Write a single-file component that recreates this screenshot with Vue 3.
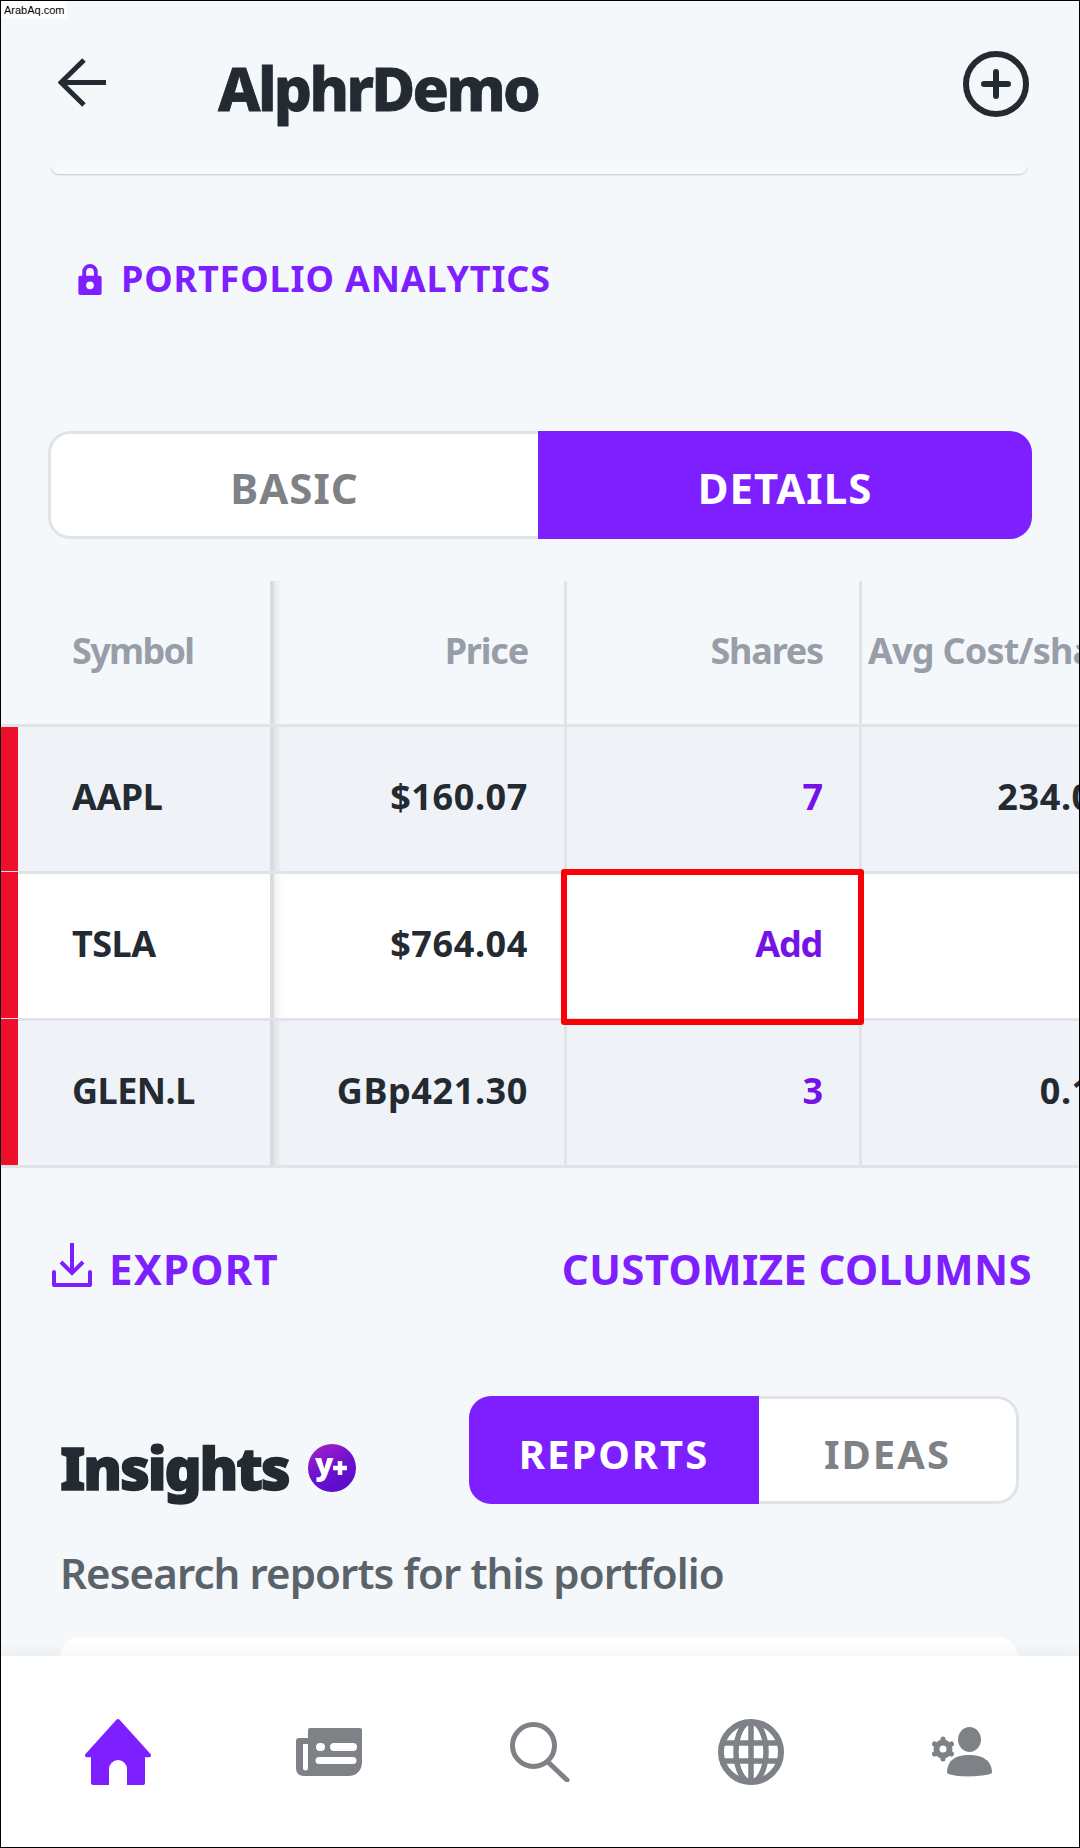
<template>
  <div class="app">
    <div class="watermark">ArabAq.com</div>

    <div class="scroll">
      <header class="header">
        <svg class="back" viewBox="0 0 50 50" width="50" height="50">
          <path d="M48 24.5H4M26 2 3 24.5 26 47" fill="none" stroke="#232a31" stroke-width="5" />
        </svg>
        <h1 class="title">AlphrDemo</h1>
        <svg class="plus" viewBox="0 0 66 66" width="66" height="66">
          <circle cx="33" cy="33" r="30" fill="none" stroke="#232a31" stroke-width="6" />
          <path d="M33 21v24M21 33h24" fill="none" stroke="#232a31" stroke-width="6" stroke-linecap="round" />
        </svg>
      </header>

      <div class="card-end"></div>

      <div class="analytics">
        <svg class="lock" viewBox="0 0 24 32" width="24" height="31">
          <path d="M6 13V8a6 6 0 0 1 12 0v5" fill="none" stroke="#7e1fff" stroke-width="4" />
          <path fill-rule="evenodd" d="M2 12h20a2 2 0 0 1 2 2v16a2 2 0 0 1-2 2H2a2 2 0 0 1-2-2V14a2 2 0 0 1 2-2Zm10 6a4 4 0 1 0 0 8 4 4 0 0 0 0-8Z" fill="#7e1fff" />
        </svg>
        <span>PORTFOLIO ANALYTICS</span>
      </div>

      <div class="switch main-switch">
        <div class="seg">BASIC</div>
        <div class="seg on">DETAILS</div>
      </div>

      <div class="table">
        <div class="row head">
          <div class="cell sym">Symbol</div>
          <div class="cell price">Price</div>
          <div class="cell shares">Shares</div>
          <div class="cell avg">Avg Cost/share</div>
        </div>
        <div v-for="r in rows" :key="r.sym" class="row body" :class="{ alt: r.alt }">
          <div class="cell sym"><i class="red"></i>{{ r.sym }}</div>
          <div class="cell price">{{ r.price }}</div>
          <div class="cell shares link">
            {{ r.shares }}
            <div v-if="r.mark" class="mark"></div>
          </div>
          <div class="cell avg">{{ r.avg }}</div>
        </div>
      </div>

      <div class="actions">
        <div class="export">
          <svg viewBox="0 0 40 44" width="40" height="44">
            <path d="M20 0v29M9 19l11 11 11-11" fill="none" stroke="#7e1fff" stroke-width="4" />
            <path d="M2 29v13h36V29" fill="none" stroke="#7e1fff" stroke-width="4" stroke-linejoin="round" stroke-linecap="round" />
          </svg>
          <span>EXPORT</span>
        </div>
        <div class="customize">CUSTOMIZE COLUMNS</div>
      </div>

      <div class="insights">
        <div class="insights-title">
          <h2>Insights</h2>
          <svg class="badge" viewBox="0 0 48 48" width="48" height="48">
            <defs>
              <linearGradient id="yplus" x1="0.2" y1="0" x2="0.7" y2="1">
                <stop offset="0" stop-color="#a51fc4" />
                <stop offset="0.55" stop-color="#6a10d0" />
                <stop offset="1" stop-color="#5a0cc8" />
              </linearGradient>
            </defs>
            <circle cx="24" cy="24" r="24" fill="url(#yplus)" />
            <text x="7" y="31" class="badge-y">y</text>
            <path d="M32 17v14M25 24h14" stroke="#fff" stroke-width="4.5" fill="none" />
          </svg>
        </div>
        <div class="switch small-switch">
          <div class="seg on">REPORTS</div>
          <div class="seg">IDEAS</div>
        </div>
      </div>

      <p class="research">Research reports for this portfolio</p>
      <div class="report-card"></div>
    </div>

    <nav class="tabs">
      <svg viewBox="0 0 66 66" width="66" height="66">
        <path fill="#7e1fff" d="M33 0a2 2 0 0 1 1.600.8L65.500 35a2 2 0 0 1-1.500 3.300H60V64a2 2 0 0 1-2 2H42V50a9 9 0 0 0-18 0v16H8a2 2 0 0 1-2-2V38.300H2A2 2 0 0 1 .5 35L31.400.8A2 2 0 0 1 33 0Z" />
      </svg>
      <svg viewBox="0 0 66 48" width="66" height="48">
        <path fill="#7e8287" fill-rule="evenodd" d="M14 0h50a2 2 0 0 1 2 2v32c0 8-5 14-14 14H8c-5 0-8-3-8-8V13a3 3 0 0 1 3-3h9V2a2 2 0 0 1 2-2ZM7 16v24a2.500 2.500 0 0 0 5 0V16ZM24 15a4 4 0 0 0 0 8h1a4 4 0 0 0 0-8Zm14 0a4 4 0 0 0 0 8h19a4 4 0 0 0 0-8ZM23 29a3.500 3.500 0 0 0 0 7h34a3.500 3.500 0 0 0 0-7Z" />
      </svg>
      <svg viewBox="0 0 60 60" width="60" height="60">
        <circle cx="23.500" cy="23.500" r="21" fill="none" stroke="#7e8287" stroke-width="5" />
        <path d="M38 40l19 18" fill="none" stroke="#7e8287" stroke-width="5" stroke-linecap="round" />
      </svg>
      <svg viewBox="0 0 66 66" width="66" height="66">
        <circle cx="33" cy="33" r="30" fill="none" stroke="#7e8287" stroke-width="6" />
        <ellipse cx="33" cy="33" rx="15" ry="30" fill="none" stroke="#7e8287" stroke-width="5.500" />
        <path d="M33 3v60M4 24h58M4 42h58" fill="none" stroke="#7e8287" stroke-width="5.500" />
      </svg>
      <svg viewBox="0 0 60 50" width="60" height="50">
        <ellipse cx="37.500" cy="12.500" rx="11.500" ry="12.500" fill="#7e8287" />
        <path fill="#7e8287" d="M15 46c0-13 9-18 22-18s23 5 23 18c-6 4-39 5-45 0Z" />
        <circle cx="11" cy="22" r="6.500" fill="none" stroke="#7e8287" stroke-width="6" />
        <path d="M11 12v3M11 29v3M2.500 17l2.500 1.500M17 25.500l2.500 1.500M2.500 27l2.500-1.500M17 18.500l2.500-1.500" stroke="#7e8287" stroke-width="5" stroke-linecap="round" />
      </svg>
    </nav>
  </div>
</template>

<script setup>
const rows = [
  { sym: 'AAPL', price: '$160.07', shares: '7', avg: '234.00', alt: true },
  { sym: 'TSLA', price: '$764.04', shares: 'Add', avg: '', mark: true },
  { sym: 'GLEN.L', price: 'GBp421.30', shares: '3', avg: '0.10', alt: true },
];
</script>

<style>
html,
body {
  margin: 0;
  background: #fff;
}
</style>

<style scoped>
.app {
  position: relative;
  width: 1080px;
  height: 1848px;
  box-sizing: border-box;
  border: 1px solid #000;
  background: #f5f8fb;
  display: flex;
  flex-direction: column;
  overflow: hidden;
  font-family: "Noto Sans", "Open Sans", sans-serif;
  color: #232a31;
}

.watermark {
  position: absolute;
  left: 0;
  top: 0;
  height: 18px;
  padding: 0 2px 0 3px;
  background: #fff;
  color: #000;
  font: 11px/18px "Liberation Sans", sans-serif;
}

.scroll {
  flex: 1;
  overflow: hidden;
}

.header {
  display: flex;
  align-items: center;
  height: 165px;
  padding: 0 50px 0 57px;
}

.back {
  margin-top: -2px;
}

.title {
  margin: 8px 0 0 110px;
  flex: 1;
  font-size: 60px;
  font-weight: 800;
  letter-spacing: -2.6px;
  -webkit-text-stroke: 0.8px #232a31;
}

.card-end {
  height: 8px;
  margin: 0 52px 0 50px;
  border-radius: 0 0 18px 18px;
  background: #f7f9fc;
  box-shadow: 0 1px 2px rgba(0, 0, 0, 0.2);
}

.analytics {
  display: flex;
  align-items: center;
  gap: 19px;
  margin: 87px 0 0 77px;
  color: #7e1fff;
  font-size: 36px;
  font-weight: 700;
  letter-spacing: 0.85px;
  line-height: 36px;
}

.switch {
  display: flex;
  font-weight: 700;
  color: #7e8287;
}

.seg {
  display: flex;
  align-items: center;
  justify-content: center;
  box-sizing: border-box;
  background: #fff;
  border: 3px solid #e0e4e9;
}

.seg:first-child {
  border-right: 0;
  border-radius: 22px 0 0 22px;
}

.seg:last-child {
  border-left: 0;
  border-radius: 0 22px 22px 0;
}

.seg.on {
  border: 0;
  background: #7e1fff;
  color: #fff;
}

.main-switch {
  width: 984px;
  height: 108px;
  margin: 134px 0 0 47px;
  font-size: 42px;
  letter-spacing: 1px;
}

.main-switch .seg {
  padding-top: 4px;
}

.main-switch .seg:first-child {
  flex: 0 0 490px;
}

.main-switch .seg:last-child {
  flex: 0 0 494px;
}

.table {
  margin-top: 42px;
  overflow: hidden;
}

.row {
  display: grid;
  grid-template-columns: 269px 294px 295px 294px;
  width: 1152px;
}

.head {
  height: 143px;
}

.body {
  height: 147px;
  background: #fff;
  border-top: 3px solid #e0e4e9;
  box-sizing: border-box;
}

.body:last-child {
  height: 150px;
  border-bottom: 3px solid #e0e4e9;
}

.alt {
  background: #eff2f6;
}

.cell {
  position: relative;
  display: flex;
  align-items: center;
  justify-content: flex-end;
  box-sizing: border-box;
  padding-right: 36px;
  padding-bottom: 5px;
  font-size: 36px;
  font-weight: 700;
  white-space: nowrap;
  border-left: 3px solid #e0e4e9;
}

.head .cell {
  color: #979ea8;
  letter-spacing: -1.2px;
}

.cell.sym {
  justify-content: flex-start;
  padding-left: 71px;
  border-left: 0;
  letter-spacing: -0.5px;
}

.head .cell.sym {
  letter-spacing: -1.7px;
}

.cell.price {
  border-left: 4px solid #d8dce1;
  letter-spacing: 0.6px;
}

.head .cell.price {
  letter-spacing: -1.2px;
}

.cell.price::before {
  content: "";
  position: absolute;
  top: 0;
  bottom: 0;
  left: 0;
  width: 8px;
  background: linear-gradient(90deg, rgba(0, 0, 0, 0.06), transparent);
}

.cell.link {
  padding-right: 37px;
  color: #7512e8;
  letter-spacing: -1.2px;
}

.cell.avg {
  padding-right: 39px;
  letter-spacing: 0.6px;
}

.head .cell.avg {
  justify-content: flex-start;
  padding-left: 6px;
  letter-spacing: -0.8px;
}

.red {
  position: absolute;
  top: 0;
  bottom: 0;
  left: 0;
  width: 17px;
  background: #ee0f2c;
}

.body + .body .red {
  top: -2px;
}

.mark {
  position: absolute;
  z-index: 2;
  top: -5px;
  left: -6px;
  width: 303px;
  height: 156px;
  box-sizing: border-box;
  border: 6px solid #fb0007;
  border-radius: 3px;
}

.actions {
  display: flex;
  justify-content: space-between;
  align-items: center;
  height: 46px;
  margin: 74px 47px 0 51px;
  color: #7e1fff;
  font-size: 42px;
  font-weight: 700;
  line-height: 46px;
}

.export {
  display: flex;
  align-items: center;
  gap: 17px;
  letter-spacing: 1.2px;
}

.export span,
.customize {
  padding-top: 7px;
}

.customize {
  letter-spacing: 0.35px;
}

.insights {
  display: flex;
  align-items: flex-start;
  justify-content: space-between;
  margin: 108px 60px 0 59px;
}

.insights-title {
  display: flex;
  align-items: center;
  gap: 20px;
  margin-top: 40px;
}

.insights h2 {
  margin: 0;
  font-size: 58px;
  line-height: 64px;
  font-weight: 900;
  letter-spacing: -2.2px;
  -webkit-text-stroke: 1.4px #232a31;
}

.badge-y {
  font-size: 30px;
  font-weight: 900;
  fill: #fff;
}

.small-switch {
  width: 550px;
  height: 108px;
  font-size: 40px;
  letter-spacing: 2px;
}

.small-switch .seg {
  padding-top: 6px;
}

.small-switch .seg:first-child {
  flex: 0 0 290px;
}

.small-switch .seg:last-child {
  flex: 0 0 260px;
}

.research {
  margin: 41px 0 0 59px;
  color: #5b636a;
  font-size: 42px;
  line-height: 56px;
  font-weight: 600;
  letter-spacing: -0.9px;
}

.report-card {
  height: 60px;
  margin: 36px 61px 0 59px;
  border-radius: 20px;
  background: #fff;
}

.tabs {
  display: grid;
  grid-template-columns: repeat(5, 211px);
  justify-items: center;
  align-items: center;
  height: 191px;
  padding: 0 0 0 11px;
  background: #fff;
  box-shadow: 0 -8px 10px rgba(0, 0, 0, 0.03);
}
</style>
